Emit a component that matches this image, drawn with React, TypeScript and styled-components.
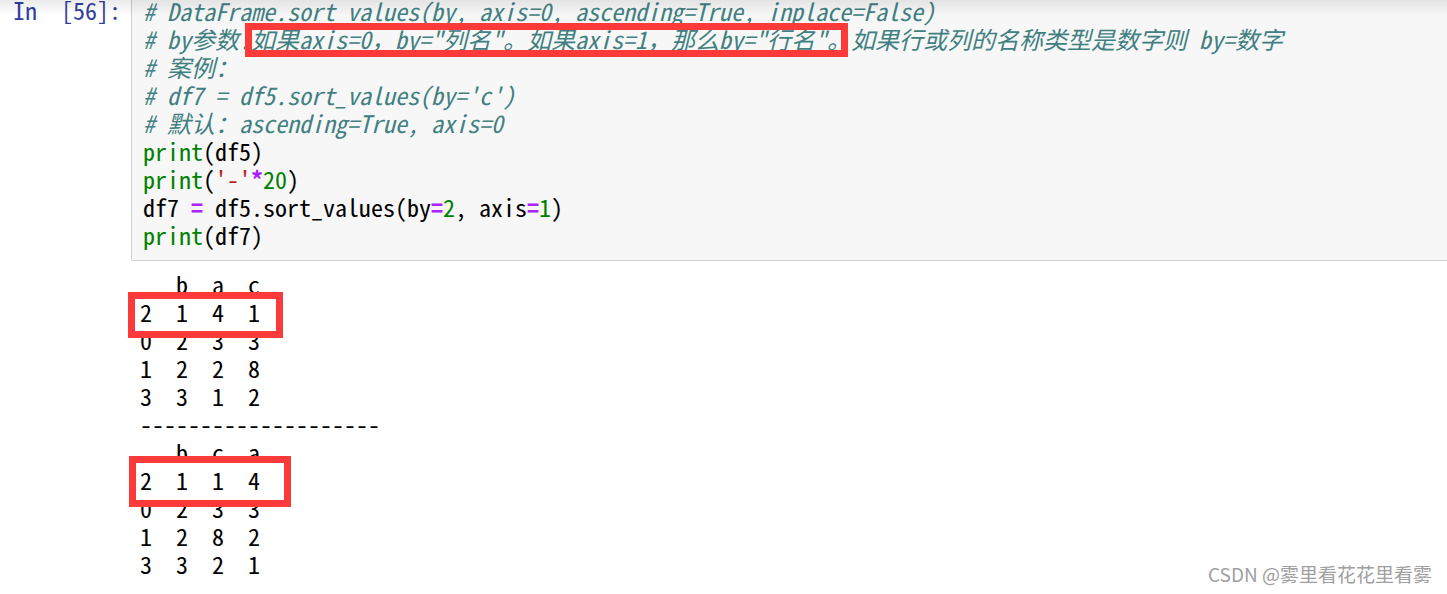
import React from "react";
import styled, { createGlobalStyle } from "styled-components";

const Global = createGlobalStyle`
  html, body { margin: 0; padding: 0; background: #ffffff; overflow: hidden; }
  #root { width: 1447px; height: 594px; }
`;

const MONO = `"Noto Sans Mono CJK SC", "Liberation Mono", "Noto Sans CJK SC", monospace`;

const Page = styled.div`
  position: relative;
  width: 1447px;
  height: 594px;
  overflow: hidden;
  background: #ffffff;
  font-family: ${MONO};
  font-size: 24px;
  line-height: 28px;
`;

const TopShadow = styled.div`
  position: absolute;
  left: 0;
  top: 0;
  width: 100%;
  height: 16px;
  background: linear-gradient(rgba(0, 0, 0, 0.08), rgba(0, 0, 0, 0));
  pointer-events: none;
`;

const CellRow = styled.div`
  display: flex;
  margin-top: -9px;
`;

const Prompt = styled.div`
  flex: 0 0 131px;
  box-sizing: border-box;
  padding: 5px 10px 0 0;
  text-align: right;
  color: #303f9f;
  white-space: pre;
`;

const CodeBox = styled.div`
  flex: 1;
  margin-right: -20px;
  background: #f7f7f7;
  border: 1px solid #cfcfcf;
  border-radius: 2px;
  padding: 5px 0 11px 11px;
`;

const Line = styled.div`
  white-space: pre;
  height: 28px;
  color: #000000;
`;

type Kind = "comment" | "kw" | "str" | "op" | "num";

const colors: Record<Kind, string> = {
  comment: "#408080",
  kw: "#008000",
  str: "#ba2121",
  op: "#aa22ff",
  num: "#008000",
};

const Tok = styled.span<{ $k: Kind }>`
  color: ${(p) => colors[p.$k]};
  font-style: ${(p) => (p.$k === "comment" ? "italic" : "normal")};
  font-weight: ${(p) => (p.$k === "op" ? 700 : 400)};
`;

const Output = styled.div`
  padding: 9px 0 0 140px;
  color: #000000;
`;

const OutLine = styled.div`
  white-space: pre;
  height: 28px;
`;

const Mark = styled.div<{ $x: number; $y: number; $w: number; $h: number }>`
  position: absolute;
  left: ${(p) => p.$x}px;
  top: ${(p) => p.$y}px;
  width: ${(p) => p.$w}px;
  height: ${(p) => p.$h}px;
  box-sizing: border-box;
  border: 7px solid #fd3a3a;
  pointer-events: none;
`;

const Watermark = styled.div`
  position: absolute;
  right: 15px;
  bottom: 8px;
  font-family: "Noto Sans CJK SC", "Liberation Sans", sans-serif;
  font-size: 19px;
  line-height: 24px;
  color: #a0a0a0;
  white-space: pre;
`;

const outA = [
  "   b  a  c",
  "2  1  4  1",
  "0  2  3  3",
  "1  2  2  8",
  "3  3  1  2",
  "--------------------",
  "   b  c  a",
  "2  1  1  4",
  "0  2  3  3",
  "1  2  8  2",
  "3  3  2  1",
];

export default function App() {
  return (
    <>
      <Global />
      <Page>
        <CellRow>
          <Prompt>{"In\u00a0\u00a0[56]:"}</Prompt>
          <CodeBox>
            <Line>
              <Tok $k="comment"># DataFrame.sort_values(by, axis=0, ascending=True, inplace=False)</Tok>
            </Line>
            <Line>
              <Tok $k="comment">
                {'# by参数.如果axis=0，by="列名"。如果axis=1，那么by="行名"。如果行或列的名称类型是数字则 by=数字'}
              </Tok>
            </Line>
            <Line>
              <Tok $k="comment"># 案例：</Tok>
            </Line>
            <Line>
              <Tok $k="comment"># df7 = df5.sort_values(by='c')</Tok>
            </Line>
            <Line>
              <Tok $k="comment"># 默认：ascending=True, axis=0</Tok>
            </Line>
            <Line>
              <Tok $k="kw">print</Tok>(df5)
            </Line>
            <Line>
              <Tok $k="kw">print</Tok>(<Tok $k="str">'-'</Tok>
              <Tok $k="op">*</Tok>
              <Tok $k="num">20</Tok>)
            </Line>
            <Line>
              df7 <Tok $k="op">=</Tok> df5.sort_values(by<Tok $k="op">=</Tok>
              <Tok $k="num">2</Tok>, axis<Tok $k="op">=</Tok>
              <Tok $k="num">1</Tok>)
            </Line>
            <Line>
              <Tok $k="kw">print</Tok>(df7)
            </Line>
          </CodeBox>
        </CellRow>
        <Output>
          {outA.map((l, i) => (
            <OutLine key={i}>{l}</OutLine>
          ))}
        </Output>
        <TopShadow />
        <Mark $x={245} $y={23} $w={603} $h={34} />
        <Mark $x={128} $y={292} $w={155} $h={46} />
        <Mark $x={129} $y={456} $w={162} $h={51} />
        <Watermark>CSDN @雾里看花花里看雾</Watermark>
      </Page>
    </>
  );
}
